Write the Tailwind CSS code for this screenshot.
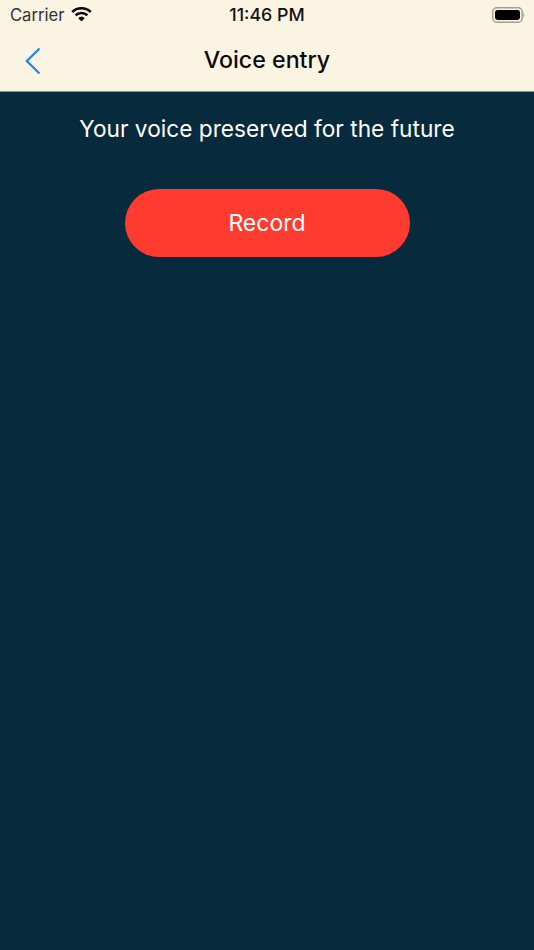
<!doctype html>
<html>
<head>
<meta charset="utf-8">
<script src="https://cdn.jsdelivr.net/npm/@tailwindcss/browser@4"></script>
</head>
<body class="w-[534px] h-[950px] overflow-hidden bg-[#072a3d] font-['Inter',sans-serif]">
  <!-- status bar + nav -->
  <header class="h-[92px] bg-[#fcf4e3] border-b border-[#8f8f88] flex flex-col">
    <div class="h-[30px] relative flex items-center justify-between pl-[10px] pr-[9px] text-[#111]">
      <div class="flex items-center gap-[7px]">
        <span class="text-[16.6px] leading-[30px] text-[#333]">Carrier</span>
        <svg width="21" height="16" viewBox="0 0 21 16" class="-mt-[2px]" fill="none" stroke="#000">
          <path d="M1.2 6 A13.5 13.5 0 0 1 19.8 6" stroke-width="2.6"/>
          <path d="M4.6 9.3 A8.6 8.6 0 0 1 16.4 9.3" stroke-width="2.6"/>
          <path d="M7.8 12.2 A4 4 0 0 1 13.2 12.2 L10.5 15 Z" fill="#000" stroke-width="1"/>
        </svg>
      </div>
      <span class="absolute left-0 right-0 text-center text-[17.8px] font-medium leading-[30px]">11:46 PM</span>
      <svg width="33" height="16" viewBox="0 0 33 16" fill="none">
        <rect x="0.75" y="0.75" width="29.5" height="14.5" rx="4" stroke="#a39f94" stroke-width="1.5"/>
        <rect x="3" y="3" width="25" height="10" rx="2.4" fill="#000"/>
        <path d="M31.5 5.5 C32.6 6 32.6 10 31.5 10.5 Z" fill="#a39f94"/>
      </svg>
    </div>
    <div class="flex-1 relative flex items-center justify-center pb-[1px]">
      <svg width="16" height="28" viewBox="0 0 16 28" fill="none" class="absolute left-[25px] top-[17px]">
        <path d="M14.5 1.5 L1.8 14 L14.5 26.5" stroke="#1a84f5" stroke-width="2.2"/>
      </svg>
      <h1 class="text-[23.2px] font-medium text-[#0b0b0b] leading-[60px]">Voice entry</h1>
    </div>
  </header>

  <main class="flex flex-col items-center">
    <p class="mt-[21px] text-[22.7px] leading-[32px] text-white">Your voice preserved for the future</p>
    <button class="mt-[44px] w-[285px] h-[68px] pt-[1px] rounded-full bg-[#ff3b30] text-white text-[23px]">Record</button>
  </main>
</body>
</html>
